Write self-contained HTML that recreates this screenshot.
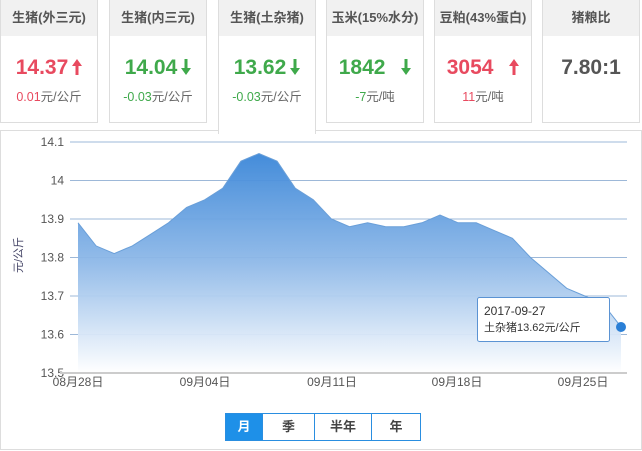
<!DOCTYPE html>
<html><head><meta charset="utf-8"><style>
body{margin:0;width:642px;height:451px;background:#fff;font-family:"Liberation Sans","Noto Sans CJK SC",sans-serif;position:relative;overflow:hidden}
.card{position:absolute;top:0;width:98px;height:123px;border:1px solid #ddd;border-top:none;box-sizing:border-box;background:#fff;text-align:center}
.card .h{background:#f1f1f1;height:36px;line-height:36px;font-size:13px;font-weight:bold;color:#555}
.card .v{font-size:21px;font-weight:bold;margin-top:20px;height:24px;line-height:24px}
.card .v svg{vertical-align:-1px;margin-left:4px}
.card .d{font-size:12.5px;color:#666;margin-top:6px}
.r{color:#e84a5f}.g{color:#3fa94b}
.panel{position:absolute;left:0;top:130px;width:642px;height:320px;border:1px solid #ddd;box-sizing:border-box}
.btns{position:absolute;top:413px;left:225px;height:28px;display:flex;border:1px solid #2a8ee0;box-sizing:border-box}
.btns div{font-size:13px;font-weight:bold;color:#444;text-align:center;line-height:26px;border-left:1px solid #2a8ee0}
.btns div:first-child{border-left:none;background:#1e90e8;color:#fff}
</style></head><body>
<div class="panel"></div>
<div class="card" style="left:0"><div class="h">生猪(外三元)</div><div class="v r">14.37<svg width="10" height="16" viewBox="0 0 10 16"><path d="M5 0L10 7H6.5V16H3.5V7H0Z" fill="#e84a5f"/></svg></div><div class="d"><span class="r">0.01</span>元/公斤</div></div>
<div class="card" style="left:109px"><div class="h">生猪(内三元)</div><div class="v g">14.04<svg width="10" height="16" viewBox="0 0 10 16"><path d="M5 16L10 9H6.5V0H3.5V9H0Z" fill="#3fa94b"/></svg></div><div class="d"><span class="g">-0.03</span>元/公斤</div></div>
<div class="card" style="left:218px;height:134px;border-bottom:none"><div class="h">生猪(土杂猪)</div><div class="v g">13.62<svg width="10" height="16" viewBox="0 0 10 16"><path d="M5 16L10 9H6.5V0H3.5V9H0Z" fill="#3fa94b"/></svg></div><div class="d"><span class="g">-0.03</span>元/公斤</div></div>
<div class="card" style="left:326px"><div class="h">玉米(15%水分)</div><div class="v g">1842 <svg width="10" height="16" viewBox="0 0 10 16" style="margin-left:10px"><path d="M5 16L10 9H6.5V0H3.5V9H0Z" fill="#3fa94b"/></svg></div><div class="d"><span class="g">-7</span>元/吨</div></div>
<div class="card" style="left:434px"><div class="h">豆粕(43%蛋白)</div><div class="v r">3054 <svg width="10" height="16" viewBox="0 0 10 16" style="margin-left:10px"><path d="M5 0L10 7H6.5V16H3.5V7H0Z" fill="#e84a5f"/></svg></div><div class="d"><span class="r">11</span>元/吨</div></div>
<div class="card" style="left:542px"><div class="h">猪粮比</div><div class="v" style="color:#555">7.80:1</div></div>
<svg id="ch" style="position:absolute;left:0;top:0" width="642" height="451" font-family="Liberation Sans, Noto Sans CJK SC, sans-serif">
<defs><linearGradient id="gr" x1="0" y1="0" x2="0" y2="1"><stop offset="0" stop-color="#3a86d8"/><stop offset="0.5" stop-color="#8fb9e8"/><stop offset="1" stop-color="#fff"/></linearGradient></defs>
<g id="grid"></g>
<path id="area" fill="url(#gr)" opacity="0.95"/>
<path id="line" fill="none" stroke="#6a9fd8" stroke-width="1"/>
<line x1="60" y1="373" x2="627" y2="373" stroke="#ccc" stroke-width="2"/>
<text x="22" y="255" font-size="11" fill="#446" transform="rotate(-90 22 255)" text-anchor="middle">元/公斤</text>
<circle cx="621" cy="327" r="5" fill="#2a7fd6"/>
<rect x="477.5" y="297.5" width="132" height="44" rx="2" fill="#fff" stroke="#5b93d3"/>
<text x="484" y="315" font-size="12" fill="#333">2017-09-27</text>
<text x="484" y="331" font-size="11" fill="#333">土杂猪13.62元/公斤</text>
</svg>
<div class="btns"><div style="width:36px">月</div><div style="width:51px">季</div><div style="width:56px">半年</div><div style="width:48px">年</div></div>
<script>
var v=[13.89,13.83,13.81,13.83,13.86,13.89,13.93,13.95,13.98,14.05,14.07,14.05,13.98,13.95,13.90,13.88,13.89,13.88,13.88,13.89,13.91,13.89,13.89,13.87,13.85,13.80,13.76,13.72,13.70,13.68,13.62];
function Y(x){return 142+(14.1-x)*385}
var d="";v.forEach(function(a,i){d+=(i?"L":"M")+(78+i*18.1).toFixed(1)+","+Y(a).toFixed(1)});
document.getElementById("line").setAttribute("d",d);
document.getElementById("area").setAttribute("d",d+"L621,373L78,373Z");
var g="",labs=["14.1","14","13.9","13.8","13.7","13.6","13.5"];
for(var i=0;i<7;i++){var y=142+i*38.5;if(i<6)g+='<line x1="70" x2="627" y1="'+y+'" y2="'+y+'" stroke="#9db8d8" stroke-width="1"/>';g+='<text x="64" y="'+(y+4)+'" font-size="12" fill="#555" text-anchor="end">'+labs[i]+'</text>';}
var xs=[[78,"08月28日"],[205,"09月04日"],[332,"09月11日"],[457,"09月18日"],[583,"09月25日"]];
xs.forEach(function(p){g+='<text x="'+p[0]+'" y="386" font-size="12" fill="#555" text-anchor="middle">'+p[1]+'</text>'});
document.getElementById("grid").innerHTML=g;
</script>
</body></html>
